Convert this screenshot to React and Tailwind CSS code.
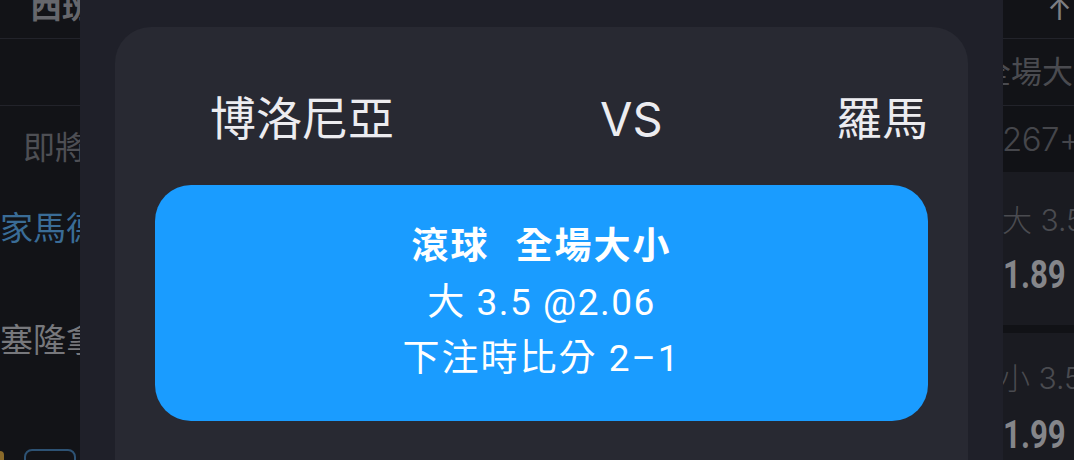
import React from "react";

const font = "font-['Inter','Noto_Sans_CJK_TC',sans-serif]";

// dimmed page under the modal, left edge
function LeftStrip() {
  return (
    <div className="w-[80px] shrink-0 h-full overflow-hidden bg-[#121317] flex flex-col">
      <div className="shrink-0 h-[39px] border-b border-[#22232a] overflow-hidden">
        <div className="pl-[30px] -mt-[13px] whitespace-nowrap text-[32px] leading-[40px] font-bold text-[#66676c]">
          西班牙
        </div>
      </div>
      <div className="shrink-0 h-[67px] border-b border-[#22232a]" />
      <div className="shrink-0 h-[84px] flex items-center whitespace-nowrap">
        <div className="w-[8px] h-[22px] -ml-[5px] rounded-full border-2 border-[#4a4b50]" />
        <span className="ml-[24px] text-[32px] leading-[40px] text-[#4e4f54]">即將開賽</span>
      </div>
      <div className="shrink-0 h-[76px] flex items-center whitespace-nowrap text-[33px] leading-[40px] text-[#3a6c96]">
        家馬德里
      </div>
      <div className="shrink-0 h-[148px] flex items-center whitespace-nowrap text-[33px] leading-[40px] text-[#77787c]">
        塞隆拿
      </div>
      <div className="shrink-0 mt-[35px] flex items-start gap-[20px]">
        <div className="w-[8px] h-[20px] -ml-[4px] mt-[2px] rounded-full bg-[#8a6a2a]" />
        <div className="w-[52px] h-[30px] rounded-[8px] border-2 border-[#2d5273]" />
      </div>
    </div>
  );
}

function Odds({ children }) {
  return (
    <span className="inline-block origin-left scale-x-[0.82] text-[38px] leading-[44px] font-bold font-['Roboto',sans-serif] text-[#85868a]">
      {children}
    </span>
  );
}

// dimmed page under the modal, right edge
function RightStrip() {
  return (
    <div className="w-[71px] shrink-0 h-full overflow-hidden bg-[#121317] flex flex-col">
      <div className="shrink-0 h-[39px] border-b border-[#22232a] overflow-hidden">
        <div className="-mt-[6px] pl-[44px] text-[30px] leading-[30px] text-[#7d7e83]">↑</div>
      </div>
      <div className="shrink-0 h-[67px] border-b border-[#22232a] flex items-center whitespace-nowrap">
        <span className="-ml-[23px] text-[31px] leading-[40px] text-[#4a4b50]">全場大小</span>
      </div>
      <div className="shrink-0 h-[66px] flex items-center whitespace-nowrap bg-[#111216]">
        <span className="-ml-[1px] text-[33px] leading-[40px] font-light tracking-[-0.5px] text-[#45464b]">267+</span>
      </div>
      <div className="shrink-0 h-[153px] bg-[#1a1b21] flex flex-col whitespace-nowrap">
        <span className="mt-[30px] -ml-[1px] text-[30px] leading-[36px] font-light text-[#4a4b50]">大 3.5</span>
        <span className="mt-[15px]"><Odds>1.89</Odds></span>
      </div>
      <div className="shrink-0 h-[8px] bg-[#111216]" />
      <div className="flex-1 bg-[#1a1b21] flex flex-col whitespace-nowrap">
        <span className="mt-[27px] -ml-[3px] text-[30px] leading-[36px] font-light text-[#4a4b50]">小 3.5</span>
        <span className="mt-[17px]"><Odds>1.99</Odds></span>
      </div>
    </div>
  );
}

function BetCard() {
  return (
    <div className="mx-[35px] mt-[27px] flex-1 rounded-t-[36px] bg-[#282932] px-[40px]">
      {/* Teams */}
      <div className="flex items-center pt-[65px] h-[118px] text-[#ececf0] text-[46px] leading-[53px]">
        <span className="ml-[55px]">博洛尼亞</span>
        <span className="ml-[206px] text-[47px]">VS</span>
        <span className="flex-1 text-right">羅馬</span>
      </div>

      {/* Bet info */}
      <div className="mt-[40px] h-[236px] rounded-[36px] bg-[#1a9cff] flex flex-col items-center justify-center text-white text-[37px] leading-[56px] font-['Roboto','Noto_Sans_CJK_TC',sans-serif]">
        <div className="font-bold tracking-[2px]">
          滾球<span className="ml-[26px]">全場大小</span>
        </div>
        <div className="tracking-[1.5px]">大 3.5 @2.06</div>
        <div className="tracking-[2px]">下注時比分 2–1</div>
      </div>
    </div>
  );
}

export default function App() {
  return (
    <div className={`w-[1074px] h-[460px] overflow-hidden flex bg-[#121317] ${font}`}>
      <LeftStrip />
      <div className="w-[923px] shrink-0 h-full bg-[#1f2029] flex flex-col">
        <BetCard />
      </div>
      <RightStrip />
    </div>
  );
}
